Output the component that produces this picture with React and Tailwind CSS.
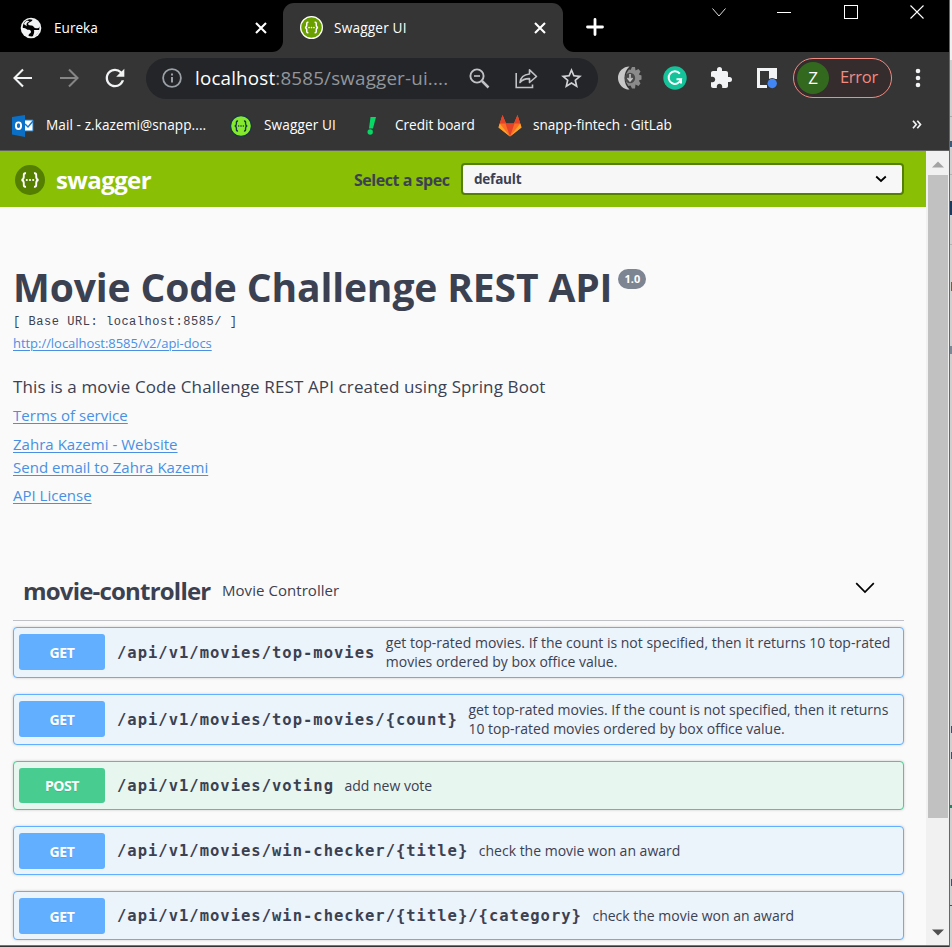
import React from "react";
import { MdExtension, MdRefresh, MdStarBorder } from "react-icons/md";

const ui = "font-['Open_Sans','Noto_Sans',sans-serif]";
const mono = "font-['DejaVu_Sans_Mono',monospace]";

function Braces({ size, bg, fg, ring, className = "" }) {
  return (
    <svg width={size} height={size} viewBox="0 0 30 30" fill="none" className={"shrink-0 " + className}>
      <circle cx="15" cy="15" r="14.2" fill={bg} stroke={ring} strokeWidth="1.6" />
      <path d="M11 8.3C8.6 8 8.7 9.4 8.8 11.4C8.9 13.5 8.4 14.6 6.6 15C8.4 15.4 8.9 16.5 8.8 18.6C8.7 20.6 8.6 22 11 21.7" stroke={fg} strokeWidth="1.9" />
      <path d="M19 8.3C21.4 8 21.3 9.4 21.2 11.4C21.1 13.5 21.6 14.6 23.4 15C21.6 15.4 21.1 16.5 21.2 18.6C21.3 20.6 21.4 22 19 21.7" stroke={fg} strokeWidth="1.9" />
      <circle cx="11.8" cy="15" r="1.1" fill={fg} />
      <circle cx="15" cy="15" r="1.1" fill={fg} />
      <circle cx="18.2" cy="15" r="1.1" fill={fg} />
    </svg>
  );
}

function Cross({ className = "" }) {
  return (
    <svg width="12" height="12" viewBox="0 0 12 12" className={"shrink-0 " + className}>
      <path d="M1 1L11 11M11 1L1 11" stroke="#fff" strokeWidth="2.1" />
    </svg>
  );
}

function TabStrip() {
  return (
    <div className="flex h-[52px] bg-[linear-gradient(#000_20px,#353535_20px)]">
      <div className="flex h-[52px] w-[283px] items-center rounded-br-[11px] bg-black pt-[3px]">
        <svg width="22" height="22" viewBox="0 0 22 22" className="ml-[20px] shrink-0">
          <circle cx="11" cy="11" r="10.3" fill="#f1f3f4" />
          <path d="M12.500 2.800C11.800 5.500 7.500 5 8.300 7.600C9 9 12.500 8 13.600 9.700C14.500 11 15 11.300 17.800 11.300C19 11.300 19.300 10 19.300 9C20 14 17.500 18.800 11.500 19.500L8.600 19C8.300 16.500 11.200 16.500 11 14.800C10.800 13 9.500 12.800 8 12.800C6.500 12.700 7 11.200 2.800 11C2.500 7 5 3 9.500 2.300Z" fill="#000" />
          <path d="M3.800 7C4.500 5.200 5.600 4.200 7 3.400L9.500 4.300C6.800 5.500 6 7 6.800 9.200Z" fill="#f1f3f4" />
          <path d="M14 13H19.500C18.500 16.500 16 18.800 13 19.700C12.800 18 14.800 16.500 14 13Z" fill="#f1f3f4" />
        </svg>
        <span className="ml-[12px] pt-px text-[13.6px] text-white">Eureka</span>
        <Cross className="mr-[16px] ml-auto" />
      </div>
      <div className="mt-[3px] flex h-[49px] w-[280px] items-center rounded-t-[11px] bg-[#353535]">
        <Braces size={23} bg="#6a9f00" fg="#fff" ring="#fff" className="ml-[17px]" />
        <span className="ml-[11px] pt-px text-[13.6px] tracking-[0.2px] text-white">Swagger UI</span>
        <Cross className="mr-[17px] ml-auto" />
      </div>
      <div className="flex h-[52px] flex-1 rounded-bl-[11px] bg-black">
        <svg width="18" height="18" viewBox="0 0 18 18" className="mt-[18px] ml-[23px] shrink-0">
          <path d="M9 1.500V16.500M1.500 9H16.500" stroke="#fff" strokeWidth="2.800" strokeLinecap="round" />
        </svg>
        <svg width="216" height="16" viewBox="0 0 216 16" fill="none" className="mt-[4px] mr-[22px] ml-auto shrink-0">
          <path d="M1.500 4.500L8 12L14.500 4.500" stroke="#ddd" />
          <path d="M66 8.500H80" stroke="#fff" />
          <rect x="133.500" y="1.500" width="13" height="13" stroke="#fff" />
          <path d="M199.500 1.500L212.500 14.500M212.500 1.500L199.500 14.500" stroke="#fff" strokeWidth="1.100" />
        </svg>
      </div>
    </div>
  );
}

function Toolbar() {
  return (
    <div className="flex h-[52px] items-center">
      <svg width="20" height="20" viewBox="0 0 20 20" fill="none" className="mb-px ml-[13px] shrink-0">
        <path d="M19 10H1.500M10 1.500L1.500 10L10 18.500" stroke="#f1f3f4" strokeWidth="2.100" />
      </svg>
      <svg width="20" height="20" viewBox="0 0 20 20" fill="none" className="mb-px ml-[26px] shrink-0">
        <path d="M1 10H18.500M10 1.500L18.500 10L10 18.500" stroke="#858585" strokeWidth="2.100" />
      </svg>
      <MdRefresh size={28} color="#f1f3f4" className="ml-[22px] shrink-0" />
      <div className="ml-[17px] flex h-[41px] w-[452px] shrink-0 items-center rounded-full bg-[#232529]">
        <svg width="20" height="20" viewBox="0 0 20 20" className="ml-[16px] shrink-0">
          <circle cx="10" cy="10" r="8.900" fill="none" stroke="#9aa0a6" strokeWidth="1.800" />
          <path d="M10 9V14.500M10 5.500V7.500" stroke="#9aa0a6" strokeWidth="2" />
        </svg>
        <span className="ml-[13px] w-[262px] text-[18.800px] leading-none tracking-[0.180px] whitespace-nowrap text-[#92969b]">
          <span className="text-white">localhost</span>:8585/swagger-ui....
        </span>
        <svg width="21" height="21" viewBox="0 0 21 21" fill="none" stroke="#c0c2c5" className="ml-[12px] shrink-0">
          <circle cx="8" cy="8" r="6.600" strokeWidth="1.900" />
          <path d="M5 8H11" strokeWidth="1.600" />
          <path d="M13 13L19.500 19.500" strokeWidth="2.500" />
        </svg>
        <svg width="23" height="21" viewBox="0 0 23 21" fill="none" stroke="#c0c2c5" strokeWidth="1.600" className="ml-[25px] shrink-0">
          <path d="M1.200 5V19.500H17.500V16.500" />
          <path d="M5 14.500C5.500 9.500 9 6.500 14.500 6V1.800L21.500 8.500L14.500 14.500V10.600C10 10.500 7.200 11.500 5 14.500Z" strokeLinejoin="round" />
        </svg>
        <MdStarBorder size={25} color="#d0d2d5" className="ml-[21px] shrink-0" />
      </div>
      <svg width="24" height="24" viewBox="0 0 24 24" className="ml-[20px] shrink-0">
        <path d="M11.500 0.500A11.500 11.500 0 0 0 11.500 23.500C8 20.500 6.500 16.500 6.500 12S8 3.500 11.500 0.500Z" fill="#c9c9c9" />
        <path d="M11 3.500L12.500 4L14 1H17L17.500 4.500L20.500 3L22.500 5.500L20.800 8.500L23.500 9.500V13.500L20.800 14.500L22.500 17.500L20.500 20L17.500 18.500L17 22.500H14L12.500 19.500L10.500 20C8.500 17.500 7.500 15 7.500 12S9 6 11 3.500Z" fill="#8b8b8b" />
        <circle cx="12" cy="12" r="5.200" fill="#4a4a4a" />
        <path d="M12 8V14.500M9.500 12L12 15L14.500 12" fill="none" stroke="#c4c4c4" strokeWidth="1.600" />
      </svg>
      <svg width="24" height="24" viewBox="0 0 24 24" fill="none" className="ml-[21px] shrink-0">
        <circle cx="12" cy="12" r="11.700" fill="#15c39a" />
        <path d="M16.800 7.600A6.300 6.300 0 1 0 18 13.300H13.500M18 13V17.500" stroke="#fff" strokeWidth="2" />
      </svg>
      <MdExtension size={24} color="#f1f3f4" className="ml-[22px] shrink-0" />
      <svg width="22" height="22" viewBox="0 0 22 22" className="ml-[23px] shrink-0">
        <path d="M1 1H21V12H13V4H4V18H11V21H1Z" fill="#f1f3f4" />
        <circle cx="16.200" cy="16.500" r="5.600" fill="#353535" />
        <circle cx="16.200" cy="16.500" r="4.700" fill="#4285f4" />
      </svg>
      <div className="ml-[15px] flex h-[40px] w-[99px] shrink-0 items-center rounded-full border-[1.500px] border-[#f28b82] bg-[#352c2d]">
        <span className="ml-[3px] flex size-[32px] items-center justify-center rounded-full bg-[#33691e] text-[17px] text-white">Z</span>
        <span className="ml-[11px] pb-[2px] text-[16.500px] tracking-[-0.300px] text-[#f28b82]">Error</span>
      </div>
      <svg width="6" height="20" viewBox="0 0 6 20" fill="#f1f3f4" className="ml-[23px] shrink-0">
        <circle cx="3" cy="3" r="2.300" />
        <circle cx="3" cy="10" r="2.300" />
        <circle cx="3" cy="17" r="2.300" />
      </svg>
    </div>
  );
}

function Bookmarks() {
  return (
    <div className="flex h-[46px] items-center pb-[3px] text-[13.600px] whitespace-nowrap text-white">
      <svg width="22" height="22" viewBox="0 0 22 22" className="ml-[12px] shrink-0">
        <path d="M11 5H21V16H11Z" fill="#fff" stroke="#1976c8" />
        <path d="M13 9L16 12L21 6" fill="none" stroke="#1976c8" strokeWidth="1.500" />
        <path d="M0 2L13 0V22L0 19.500Z" fill="#0b6fc6" />
        <ellipse cx="6.500" cy="10.700" rx="2.600" ry="3.300" fill="none" stroke="#fff" strokeWidth="1.900" />
      </svg>
      <span className="ml-[12px] w-[160px] tracking-[0.080px]">Mail - z.kazemi@snapp....</span>
      <Braces size={22} bg="#85ea2d" fg="#173647" ring="#173647" className="ml-[24px]" />
      <span className="ml-[12px] w-[73px] tracking-[0.120px]">Swagger UI</span>
      <svg width="10" height="18" viewBox="0 0 10 18" className="ml-[30px] shrink-0">
        <path d="M3.500 0H9L6 11.500H2Z" fill="#08d665" />
        <circle cx="3.200" cy="15" r="2.700" fill="#08d665" />
      </svg>
      <span className="ml-[18px] w-[81px]">Credit board</span>
      <svg width="24" height="22" viewBox="0 0 24 22" className="ml-[22px] shrink-0">
        <path d="M4.500 0L8 8.500H16L19.500 0L23.500 12.500L12 21.500L0.500 12.500Z" fill="#fc6d26" />
        <path d="M4.500 0L8 8.500H1.700ZM19.500 0L16 8.500H22.300Z" fill="#e24329" />
        <path d="M7.500 8.500H16.500L12 21.500Z" fill="#e24329" />
        <path d="M1.700 8.500L0.500 12.500L12 21.500ZM22.300 8.500L23.500 12.500L12 21.500Z" fill="#fca326" />
      </svg>
      <span className="ml-[11px]">snapp-fintech · GitLab</span>
      <svg width="10" height="9" viewBox="0 0 10 9" className="mr-[27px] mb-[2px] ml-auto shrink-0">
        <path d="M1 0.800L4.200 4.500L1 8.200M5.300 0.800L8.500 4.500L5.300 8.200" fill="none" stroke="#f1f3f4" strokeWidth="1.700" />
      </svg>
    </div>
  );
}

const link = "self-start text-[#4990e2] underline decoration-1 underline-offset-2";

const endpoints = [
  { method: "GET", path: "/api/v1/movies/top-movies", text: ["get top-rated movies. If the count is not specified, then it returns 10 top-rated", "movies ordered by box office value."] },
  { method: "GET", path: "/api/v1/movies/top-movies/{count}", text: ["get top-rated movies. If the count is not specified, then it returns", "10 top-rated movies ordered by box office value."] },
  { method: "POST", path: "/api/v1/movies/voting", text: ["add new vote"] },
  { method: "GET", path: "/api/v1/movies/win-checker/{title}", text: ["check the movie won an award"] },
  { method: "GET", path: "/api/v1/movies/win-checker/{title}/{category}", text: ["check the movie won an award"] },
];

function Endpoint({ method, path, text }) {
  const post = method === "POST";
  const tall = text.length > 1;
  return (
    <div
      className={
        "flex shrink-0 items-center rounded-[4px] border pl-[5px] shadow-[0_0_3px_rgba(0,0,0,0.19)] " +
        (tall ? "h-[51px] " : "h-[49px] ") +
        (post ? "border-[#49cc90] bg-[#e8f6f0]" : "border-[#61affe] bg-[#ebf3fb]")
      }
    >
      <span
        className={
          "mt-[6px] flex w-[86px] shrink-0 items-center justify-center self-start rounded-[3px] text-[14px] font-bold tracking-[-0.400px] text-white [text-shadow:0_1px_0_rgba(0,0,0,0.1)] " +
          (post ? "h-[35px] bg-[#49cc90]" : "h-[36px] bg-[#61affe]")
        }
      >
        {method}
      </span>
      <span className={"ml-[12px] pt-[2px] text-[15.500px] font-bold tracking-[1px] whitespace-nowrap text-[#3b4151] " + mono}>{path}</span>
      <div className={"ml-[10.500px] flex flex-col text-[14px] leading-[19px] whitespace-nowrap text-[#3b4151] " + (tall ? "pb-[2px]" : "pb-px")}>
        {text.map((t) => (
          <span key={t}>{t}</span>
        ))}
      </div>
    </div>
  );
}

function Page() {
  return (
    <div className="flex h-[794px] w-[926px] flex-col overflow-hidden bg-[#fafafa] text-[#3b4151]">
      <header className="flex h-[56px] shrink-0 items-center bg-[#89bf04]">
        <Braces size={30} bg="#547f00" fg="#fff" ring="#547f00" className="mt-[2px] ml-[15px]" />
        <span className="ml-[11px] w-[96px] pt-[2px] text-[24px] leading-none font-bold tracking-[-0.600px] text-white">swagger</span>
        <span className="ml-[202px] w-[96px] pt-[2px] text-[16px] font-bold tracking-[-0.470px] whitespace-nowrap">Select a spec</span>
        <div className="ml-[11px] flex h-[32px] w-[443px] items-center rounded-[4px] border-2 border-[#547f00] bg-[#f7f7f7]">
          <span className="ml-[11px] text-[13.500px] font-bold tracking-[-0.200px]">default</span>
          <svg width="12" height="8" viewBox="0 0 12 8" className="mr-[15px] ml-auto">
            <path d="M1.200 1.500L6 6L10.800 1.500" fill="none" stroke="#000" strokeWidth="1.800" />
          </svg>
        </div>
      </header>
      <main className="flex flex-col pr-[22px] pl-[13px]">
        <div className="mt-[53px] flex h-[54px] items-start">
          <h1 className="text-[39px] leading-[53px] font-bold tracking-[-0.120px] whitespace-nowrap">Movie Code Challenge REST API</h1>
          <span className="mt-[9px] ml-[6px] flex h-[20px] w-[28px] items-center justify-center rounded-full bg-[#7d8492] text-[11px] font-bold text-white">1.0</span>
        </div>
        <div className="h-[16px] font-['Liberation_Mono',monospace] text-[12px] leading-[17px] tracking-[0.540px] whitespace-pre">[ Base URL: localhost:8585/ ]</div>
        <a className={"mt-[4px] text-[13px] leading-[18px] tracking-[-0.040px] " + link}>http://localhost:8585/v2/api-docs</a>
        <p className="mt-[23px] text-[17px] leading-[24px] tracking-[0.120px]">This is a movie Code Challenge REST API created using Spring Boot</p>
        <a className={"mt-[5px] text-[15px] leading-[22px] tracking-[0.030px] " + link}>Terms of service</a>
        <a className={"mt-[7px] text-[15px] leading-[22px] tracking-[0.030px] " + link}>Zahra Kazemi - Website</a>
        <a className={"mt-[1px] text-[15px] leading-[22px] tracking-[0.030px] " + link}>Send email to Zahra Kazemi</a>
        <a className={"mt-[6px] text-[15px] leading-[22px] " + link}>API License</a>
        <div className="mt-[56px] flex h-[59px] items-center border-b border-[#bfc1c6] pl-[10px]">
          <h2 className="w-[188px] text-[24px] font-bold tracking-[-0.800px] whitespace-nowrap">movie-controller</h2>
          <span className="ml-[11px] pb-[2px] text-[15px] tracking-[0.050px]">Movie Controller</span>
          <svg width="20" height="12" viewBox="0 0 20 12" className="mr-[29px] mb-[6px] ml-auto">
            <path d="M1.200 1.200L10 10L18.800 1.200" fill="none" stroke="#000" strokeWidth="1.700" />
          </svg>
        </div>
        <div className="mt-[6px] flex flex-col gap-[16px]">
          {endpoints.map((e) => (
            <Endpoint key={e.path} {...e} />
          ))}
        </div>
      </main>
    </div>
  );
}

function Scrollbar() {
  return (
    <div className="flex h-[794px] w-[23px] flex-col items-center bg-[#f1f1f1]">
      <svg width="12" height="7" viewBox="0 0 12 7" className="mt-[10px] shrink-0">
        <path d="M0 6.500L6 0.500L12 6.500Z" fill="#a3a3a3" />
      </svg>
      <div className="mt-[7px] h-[643px] w-[20px] shrink-0 bg-[#c1c1c1]" />
      <svg width="12" height="7" viewBox="0 0 12 7" className="mt-[111px] shrink-0">
        <path d="M0 0.500H12L6 6.500Z" fill="#505050" />
      </svg>
    </div>
  );
}

/* Sliver of the window that sits behind the browser. */
function Behind() {
  return (
    <div className="flex w-[3px] flex-col border-l border-[#666] bg-[#d0d0d0]">
      <div className="h-[60px] bg-[#f0f0f0]" />
      <div className="mt-[56px] h-px bg-[#aaa]" />
      <div className="mt-[24px] h-[6px] bg-[#3c5a78]" />
      <div className="mt-[27px] h-px bg-[#b4b4b4]" />
      <div className="mt-[26px] h-[14px] bg-[#1c3a5c]" />
      <div className="mt-[29px] h-px bg-[#b4b4b4]" />
      <div className="mt-[37px] ml-px h-[9px] bg-[#8a5a28]" />
      <div className="mt-[55px] h-[8px] bg-[#7c8894]" />
      <div className="mt-[372px] ml-px h-[7px] bg-[#3c4c80]" />
      <div className="mt-[19px] ml-px h-[7px] bg-[#3c4c80]" />
      <div className="mt-[46px] h-[3px] bg-[#2c8060]" />
      <div className="mt-[71px] ml-px h-[7px] bg-[#3c4c80]" />
      <div className="mt-[19px] h-px bg-[#3c4c80]" />
    </div>
  );
}

export default function App() {
  return (
    <div className={"flex h-[947px] w-[952px] overflow-hidden " + ui}>
      <div className="flex w-[949px] shrink-0 flex-col bg-[#353535]">
        <TabStrip />
        <Toolbar />
        <Bookmarks />
        <div className="h-px bg-[#606060]" />
        <div className="flex">
          <Page />
          <Scrollbar />
        </div>
        <div className="h-[2px] border-t border-[#777] bg-[#333]" />
      </div>
      <Behind />
    </div>
  );
}
